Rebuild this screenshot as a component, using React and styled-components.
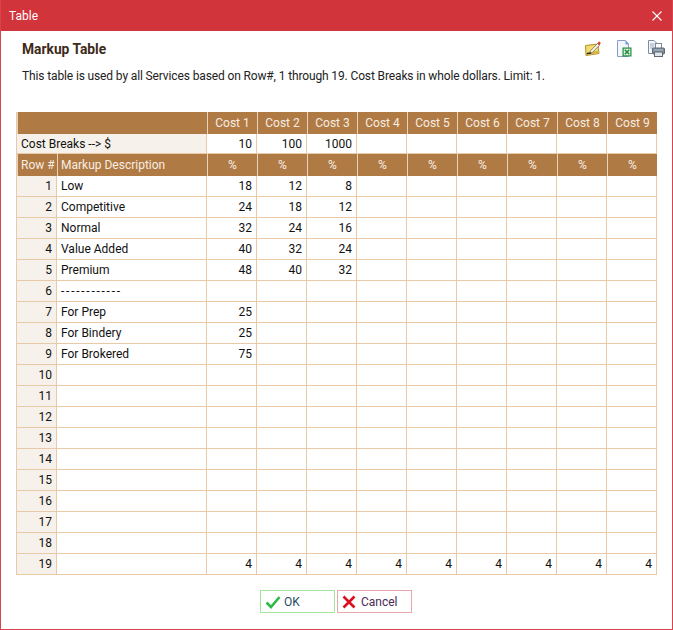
import styled, { createGlobalStyle } from "styled-components";

const costs = [1, 2, 3, 4, 5, 6, 7, 8, 9];

const rows = [
  { label: "Low", values: [18, 12, 8] },
  { label: "Competitive", values: [24, 18, 12] },
  { label: "Normal", values: [32, 24, 16] },
  { label: "Value Added", values: [40, 32, 24] },
  { label: "Premium", values: [48, 40, 32] },
  { label: "------------", values: [], dashes: true },
  { label: "For Prep", values: [25] },
  { label: "For Bindery", values: [25] },
  { label: "For Brokered", values: [75] },
  ...Array.from({ length: 9 }, () => ({ label: "", values: [] })),
  { label: "", values: [4, 4, 4, 4, 4, 4, 4, 4, 4] },
];

const breaks = [10, 100, 1000];

function NoteIcon() {
  return (
    <svg width="17" height="17" viewBox="0 0 17 17">
      <path d="M1.5 5.5 L14 4 L15 13.5 L2 15.5 Z" fill="#f2dc6c" stroke="#b4912c" strokeLinejoin="round" />
      <path d="M2.3 12.3 L14.6 10.8 L14.9 13.3 L2.3 15 Z" fill="#d9b544" />
      <path d="M6.5 10.8 L13.5 3.5 L15.4 5.2 L8.3 12.5 L5.6 13 Z" fill="#fbf8ec" stroke="#6f6a5a" strokeWidth="0.8" />
      <path d="M13.5 3.5 L15 1.2 L16.8 3 L15.4 5.2 Z" fill="#d8402e" />
      <path d="M2.8 13.6 L7 13.1" stroke="#222" strokeWidth="1.1" />
    </svg>
  );
}

function ExcelIcon() {
  return (
    <svg width="17" height="17" viewBox="0 0 17 17">
      <path d="M1.5 0.5 H9.5 L12.5 4 V16.5 H1.5 Z" fill="#f3f7fd" stroke="#8c9cc8" />
      <path d="M9.5 0.5 V4.5 H13 Z" fill="#6f9fdc" />
      <rect x="6.5" y="7.5" width="9" height="9" fill="#1f8a3b" />
      <rect x="7.7" y="8.7" width="6.6" height="6.6" fill="#e9f6ea" />
      <path d="M8.8 9.8 L13.2 14.2 M13.2 9.8 L8.8 14.2" stroke="#1f8a3b" strokeWidth="1.6" />
    </svg>
  );
}

function PrintIcon() {
  return (
    <svg width="17" height="17" viewBox="0 0 17 17">
      <path d="M0.5 0.5 H6 L8.5 3 V13.5 H0.5 Z" fill="#f5f7fa" stroke="#7a8ea8" />
      <path d="M2 4 H6.5 M2 6 H6.5 M2 8 H5" stroke="#9aa8b8" />
      <rect x="7.5" y="3.5" width="6" height="5" fill="#fbfcfd" stroke="#7d8a97" />
      <rect x="4.5" y="8" width="12" height="6" rx="1" fill="#7f8d9b" stroke="#5e6a76" />
      <rect x="6.5" y="12" width="8" height="4.5" fill="#dfe6ec" stroke="#5e6a76" />
      <path d="M6 10 H15" stroke="#b7c2cc" />
    </svg>
  );
}

function CheckIcon() {
  return (
    <svg width="16" height="14" viewBox="0 0 16 14">
      <path d="M1.5 7.5 L6 12 L14.5 2" fill="none" stroke="#2fb84a" strokeWidth="2.6" />
    </svg>
  );
}

function CrossIcon() {
  return (
    <svg width="14" height="14" viewBox="0 0 14 14">
      <path d="M1.5 1.5 L12.5 12.5 M12.5 1.5 L1.5 12.5" fill="none" stroke="#dc0f1e" strokeWidth="2.6" />
    </svg>
  );
}

export default function App() {
  return (
    <>
      <GlobalStyle />
      <Window>
        <TitleBar>
          <span>Table</span>
          <CloseButton>
            <svg width="10" height="10" viewBox="0 0 10 10">
              <path d="M0.5 0.5 L9.5 9.5 M9.5 0.5 L0.5 9.5" stroke="#fff" strokeWidth="1.1" />
            </svg>
          </CloseButton>
        </TitleBar>
        <Content>
          <HeadingRow>
            <Heading>Markup Table</Heading>
            <Tools>
              <NoteIcon />
              <ExcelIcon />
              <PrintIcon />
            </Tools>
          </HeadingRow>
          <Intro>
            This table is used by all Services based on Row#, 1 through 19. Cost Breaks in whole dollars. Limit: 1.
          </Intro>
          <Grid>
            <colgroup>
              <col style={{ width: 40 }} />
              <col style={{ width: 150 }} />
              {costs.map((c) => (
                <col key={c} style={{ width: 50 }} />
              ))}
            </colgroup>
            <tbody>
              <tr>
                <HeadCell colSpan={2} />
                {costs.map((c) => (
                  <HeadCell key={c} $center>
                    Cost {c}
                  </HeadCell>
                ))}
              </tr>
              <tr>
                <LabelCell colSpan={2} $thin>
                  Cost Breaks --&gt; $
                </LabelCell>
                {costs.map((c, i) => (
                  <ValueCell key={c} $thin>
                    {breaks[i]}
                  </ValueCell>
                ))}
              </tr>
              <tr>
                <HeadCell $right>Row #</HeadCell>
                <HeadCell>Markup Description</HeadCell>
                {costs.map((c) => (
                  <HeadCell key={c} $center>
                    %
                  </HeadCell>
                ))}
              </tr>
              {rows.map((row, r) => (
                <tr key={r}>
                  <NumberCell>{r + 1}</NumberCell>
                  <TextCell $dashes={row.dashes}>{row.label}</TextCell>
                  {costs.map((c, i) => (
                    <ValueCell key={c}>{row.values[i]}</ValueCell>
                  ))}
                </tr>
              ))}
            </tbody>
          </Grid>
          <Actions>
            <ActionButton $tone="#a6e3a1" $ink="#1f4f5f" $gap={3}>
              <CheckIcon />
              OK
            </ActionButton>
            <ActionButton $tone="#e6a8ab" $ink="#4a2a55" $gap={5}>
              <CrossIcon />
              Cancel
            </ActionButton>
          </Actions>
        </Content>
      </Window>
    </>
  );
}

const GlobalStyle = createGlobalStyle`
  html, body {
    margin: 0;
    padding: 0;
    background: #fff;
  }
  body {
    font-family: Roboto, "Open Sans", sans-serif;
    font-size: 12px;
  }
`;

const Window = styled.div`
  box-sizing: border-box;
  width: 673px;
  height: 630px;
  display: flex;
  flex-direction: column;
  border: 1px solid #d9434e;
  border-top: 0;
  overflow: hidden;
  background: #fff;
`;

const TitleBar = styled.div`
  height: 31px;
  flex: none;
  display: flex;
  align-items: center;
  justify-content: space-between;
  padding: 0 11px 0 9px;
  background: #d2343b;
  color: #fff;
  font-size: 12px;
  margin: 0 -1px;
`;

const CloseButton = styled.div`
  display: flex;
  align-items: center;
`;

const Content = styled.div`
  flex: 1;
  display: flex;
  flex-direction: column;
  padding: 0 15px;
`;

const HeadingRow = styled.div`
  height: 36px;
  display: flex;
  align-items: center;
  justify-content: space-between;
  padding-left: 6px;
  margin-right: -8px;
`;

const Heading = styled.div`
  font-size: 13.8px;
  font-weight: 700;
  color: #3d2b1a;
`;

const Tools = styled.div`
  display: flex;
  gap: 15px;
  margin-top: -1px;
`;

const Intro = styled.div`
  height: 45px;
  padding: 1px 6px 0;
  box-sizing: border-box;
  line-height: 16px;
  color: #222;
  font-size: 12px;
  letter-spacing: -0.13px;
  white-space: nowrap;
`;

const Grid = styled.table`
  table-layout: fixed;
  width: 641px;
  border-collapse: separate;
  border-spacing: 0;
  border-left: 1px solid #e8c9a8;
  font-size: 12px;
  color: #111;
  flex: none;
`;

const Cell = styled.td`
  box-sizing: border-box;
  height: ${(p) => (p.$thin ? 20 : 21)}px;
  padding: 0 4px;
  border-right: 1px solid #e8c9a8;
  border-bottom: 1px solid #e8c9a8;
  white-space: nowrap;
  overflow: hidden;
  line-height: 14px;
`;

const HeadCell = styled.td`
  box-sizing: border-box;
  height: 22px;
  padding: 0 3px;
  background: #b07a45;
  color: #f7ede2;
  border-left: 1px solid #e9d3bc;
  white-space: nowrap;
  overflow: hidden;
  line-height: 14px;
  text-align: ${(p) => (p.$center ? "center" : p.$right ? "right" : "left")};
`;

const LabelCell = styled(Cell)`
  background: #f6f1ea;
`;

const NumberCell = styled(Cell)`
  background: #f6f1ea;
  text-align: right;
`;

const TextCell = styled(Cell)`
  letter-spacing: ${(p) => (p.$dashes ? "1.75px" : "normal")};
`;

const ValueCell = styled(Cell)`
  text-align: right;
`;

const Actions = styled.div`
  display: flex;
  justify-content: center;
  gap: 2px;
  margin-top: 15px;
  padding-right: 1px;
`;

const ActionButton = styled.button`
  box-sizing: border-box;
  width: 75px;
  height: 23px;
  display: flex;
  align-items: center;
  gap: ${(p) => p.$gap}px;
  padding: 0 4px;
  background: #fff;
  border: 1px solid ${(p) => p.$tone};
  color: ${(p) => p.$ink};
  font-family: inherit;
  font-size: 12px;
`;
